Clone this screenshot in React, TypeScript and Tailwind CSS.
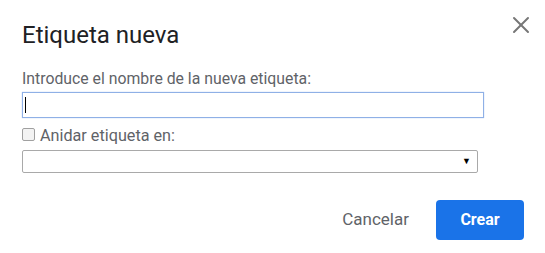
import { X } from "lucide-react";

export default function App() {
  return (
    <div
      className="relative h-[253px] w-[545px] bg-white"
      style={{ fontFamily: "Roboto, Arial, sans-serif" }}
    >
      {/* close */}
      <button className="absolute left-[507px] top-[11px] text-[#777]">
        <X size={28} strokeWidth={1.7} />
      </button>

      <div className="px-[22px] pt-[20px]">
        <h1 className="text-[24px] leading-[30px] text-[#202124]">Etiqueta nueva</h1>

        <label className="mt-[19px] block text-[15.8px] leading-[20px] text-[#5f6368]">
          Introduce el nombre de la nueva etiqueta:
        </label>
        <div className="mt-[3px] flex h-[26px] w-[462px] items-center border border-[#8fb0e6] bg-white px-[2px] shadow-[0_0_1px_#a8c4f0]">
          <span className="h-[16px] w-px bg-black" />
        </div>

        <div className="mt-[8px] flex items-start gap-[5px]">
          <span className="mt-[2px] h-[13px] w-[13px] rounded-[2px] border border-[#a0a0a0] bg-[#f3f3f3]" />
          <span className="text-[16.2px] leading-[20px] text-[#5f6368]">Anidar etiqueta en:</span>
        </div>
        <div className="mt-[4px] flex h-[23px] w-[456px] items-center justify-end rounded-[2px] border border-[#a9a9a9] bg-white pr-[6px]">
          <span className="text-[9px] leading-none text-black">▼</span>
        </div>

        <div className="mr-[-1px] mt-[27px] flex items-center justify-end gap-[27px]">
          <button className="text-[17px] font-normal text-[#5f6368]">Cancelar</button>
          <button className="h-[40px] w-[88px] rounded-[4px] bg-[#1a73e8] text-[16px] font-bold text-white">
            Crear
          </button>
        </div>
      </div>
    </div>
  );
}
